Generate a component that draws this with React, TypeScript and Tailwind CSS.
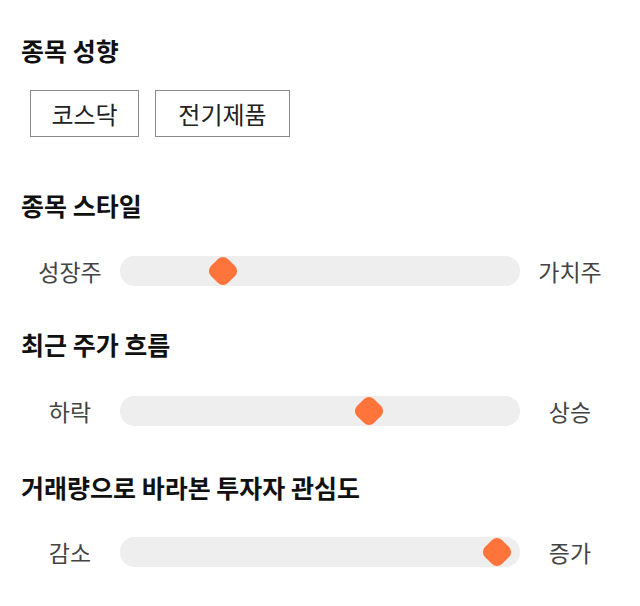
const font = "font-['Noto_Sans_CJK_KR',sans-serif]";

type SliderRowProps = {
  left: string;
  right: string;
  thumb: number; // thumb center, px from track start
};

function SliderRow({ left, right, thumb }: SliderRowProps) {
  return (
    <div className="flex h-[30px] items-center">
      <div className="w-[100px] text-center text-[23px] leading-[30px] text-[#444]">{left}</div>
      <div className="relative h-[30px] flex-1 rounded-[14px/15px] bg-[#eeeeee]">
        <div
          className="absolute top-[3px] h-[24px] w-[24px] rotate-45 rounded-[7px] bg-[#ff743a]"
          style={{ left: thumb - 12 }}
        />
      </div>
      <div className="w-[100px] text-center text-[23px] leading-[30px] text-[#444]">{right}</div>
    </div>
  );
}

function Title({ children, className = "" }: { children: string; className?: string }) {
  return (
    <h2 className={`pl-px text-[25px] font-bold leading-[32px] text-[#111] ${className}`}>{children}</h2>
  );
}

const tags = [
  { label: "코스닥", width: "w-[109px]" },
  { label: "전기제품", width: "w-[135px]" },
];

export default function App() {
  return (
    <div className={`h-[606px] w-[640px] bg-white px-[20px] pt-[34px] ${font}`}>
      <Title>종목 성향</Title>
      <div className="ml-[10px] mt-[24px] flex gap-[16px]">
        {tags.map((tag) => (
          <div
            key={tag.label}
            className={`h-[47px] border border-[#8a8a8a] text-center text-[24px] leading-[45px] text-[#222] ${tag.width}`}
          >
            {tag.label}
          </div>
        ))}
      </div>

      <Title className="mt-[52px]">종목 스타일</Title>
      <div className="mt-[35px]">
        <SliderRow left="성장주" right="가치주" thumb={103} />
      </div>

      <Title className="mt-[42px]">최근 주가 흐름</Title>
      <div className="mt-[36px]">
        <SliderRow left="하락" right="상승" thumb={249} />
      </div>

      <Title className="mt-[45px]">거래량으로 바라본 투자자 관심도</Title>
      <div className="mt-[34px]">
        <SliderRow left="감소" right="증가" thumb={377} />
      </div>
    </div>
  );
}
